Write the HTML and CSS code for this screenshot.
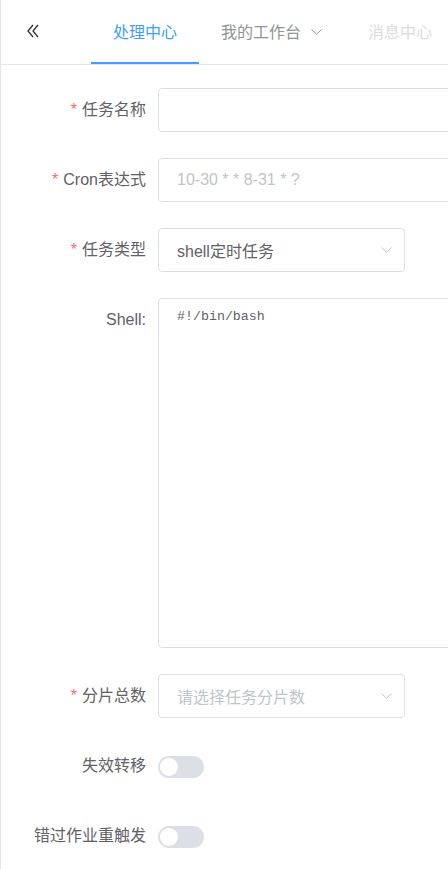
FILE: index.html
```html
<!DOCTYPE html>
<html lang="zh-CN">
<head>
<meta charset="utf-8">
<title>任务编辑</title>
<link rel="stylesheet" href="styles.css">
</head>
<body>
<div class="app">
  <header class="nav">
    <button class="collapse" type="button" aria-label="收起">
      <svg width="12" height="14" viewBox="0 0 12 14" fill="none" stroke="#303133" stroke-width="1.3">
        <polyline points="6,1 1,7 6,13"/>
        <polyline points="11,1 6,7 11,13"/>
      </svg>
    </button>
    <ul class="menu">
      <li class="menu-item active">处理中心</li>
      <li class="menu-item submenu">我的工作台
        <svg class="sub-arrow" width="11" height="6" viewBox="0 0 11 6" fill="none" stroke="#909399" stroke-width="1">
          <polyline points="0.5,0.5 5.5,5.2 10.5,0.5"/>
        </svg>
      </li>
      <li class="menu-item disabled">消息中心</li>
    </ul>
  </header>

  <form class="form">
    <div class="row">
      <label class="label required">任务名称</label>
      <div class="control"><input class="input wide" type="text"></div>
    </div>
    <div class="row">
      <label class="label required">Cron表达式</label>
      <div class="control"><input class="input wide" type="text" placeholder="10-30 * * 8-31 * ?"></div>
    </div>
    <div class="row">
      <label class="label required">任务类型</label>
      <div class="control">
        <div class="select">
          <span class="select-value">shell定时任务</span>
          <svg class="select-arrow" width="11" height="6" viewBox="0 0 11 6" fill="none" stroke="#c0c4cc" stroke-width="1">
            <polyline points="0.5,0.5 5.5,5.2 10.5,0.5"/>
          </svg>
        </div>
      </div>
    </div>
    <div class="row">
      <label class="label">Shell:</label>
      <div class="control"><textarea class="textarea">#!/bin/bash</textarea></div>
    </div>
    <div class="row">
      <label class="label required">分片总数</label>
      <div class="control">
        <div class="select">
          <span class="select-placeholder">请选择任务分片数</span>
          <svg class="select-arrow" width="11" height="6" viewBox="0 0 11 6" fill="none" stroke="#c0c4cc" stroke-width="1">
            <polyline points="0.5,0.5 5.5,5.2 10.5,0.5"/>
          </svg>
        </div>
      </div>
    </div>
    <div class="row">
      <label class="label">失效转移</label>
      <div class="control"><span class="switch"><span class="knob"></span></span></div>
    </div>
    <div class="row">
      <label class="label">错过作业重触发</label>
      <div class="control"><span class="switch"><span class="knob"></span></span></div>
    </div>
  </form>
</div>
</body>
</html>
```

FILE: styles.css
```css
html, body {
  margin: 0;
  padding: 0;
  background: #fff;
  overflow: hidden;
}
body {
  font-family: "Liberation Sans", "Noto Sans CJK SC", sans-serif;
  color: #606266;
  font-size: 16px;
}
.app {
  width: 447px;
  height: 869px;
  border-left: 1px solid #e6e6e6;
  overflow: hidden;
}
.nav {
  display: flex;
  align-items: stretch;
  height: 64px;
  border-bottom: 1px solid #e6e6e6;
}
.collapse {
  border: 0;
  background: none;
  padding: 0;
  margin-left: 26px;
  width: 12px;
  display: flex;
  align-items: center;
  margin-top: -2px;
  flex: none;
}
.menu {
  list-style: none;
  margin: 0 0 0 52px;
  padding: 0;
  display: flex;
  flex: none;
}
.menu-item {
  height: 64px;
  padding: 0 22px;
  box-sizing: border-box;
  color: #909399;
  white-space: nowrap;
  display: flex;
  align-items: center;
  padding-bottom: 2px;
}
.menu-item.active {
  color: #409eff;
  border-bottom: 2px solid #409eff;
  padding-bottom: 0;
}
.menu-item.submenu {
  padding-right: 24px;
}
.sub-arrow {
  margin-left: 10px;
  margin-top: 1px;
}
.menu-item.disabled {
  color: #dcdcdc;
}
.form {
  padding-top: 23px;
  margin: 0;
}
.row {
  display: grid;
  grid-template-columns: 145px 1fr;
  column-gap: 12px;
  margin-bottom: 26px;
}
.label {
  text-align: right;
  line-height: 44px;
  height: 44px;
  white-space: nowrap;
  color: #606266;
}
.label.required::before {
  content: "*";
  color: #f56c6c;
  margin-right: 5px;
}
.control {
  display: flex;
  align-items: center;
  min-height: 44px;
}
.input {
  box-sizing: border-box;
  height: 44px;
  border: 1px solid #dcdfe6;
  border-radius: 4px;
  padding: 0 18px;
  font: inherit;
  font-size: 16px;
  color: #606266;
  outline: none;
}
.input.wide {
  width: 340px;
}
.input::placeholder {
  color: #c0c4cc;
}
.select {
  box-sizing: border-box;
  width: 247px;
  height: 44px;
  border: 1px solid #dcdfe6;
  border-radius: 4px;
  padding: 0 12px 0 18px;
  display: flex;
  align-items: center;
  justify-content: space-between;
}
.select-value {
  color: #606266;
}
.select-placeholder {
  color: #c0c4cc;
}
.textarea {
  box-sizing: border-box;
  width: 340px;
  height: 350px;
  border: 1px solid #dcdfe6;
  border-radius: 4px;
  padding: 8px 18px;
  font-family: "Liberation Mono", monospace;
  font-size: 13.3px;
  line-height: 20px;
  color: #606266;
  resize: none;
  outline: none;
  display: block;
}
.switch {
  position: relative;
  display: inline-block;
  width: 46px;
  height: 22px;
  border-radius: 11px;
  background: #dcdfe6;
  margin-top: 2px;
}
.knob {
  position: absolute;
  left: 2px;
  top: 2px;
  width: 18px;
  height: 18px;
  border-radius: 50%;
  background: #fff;
}
```
